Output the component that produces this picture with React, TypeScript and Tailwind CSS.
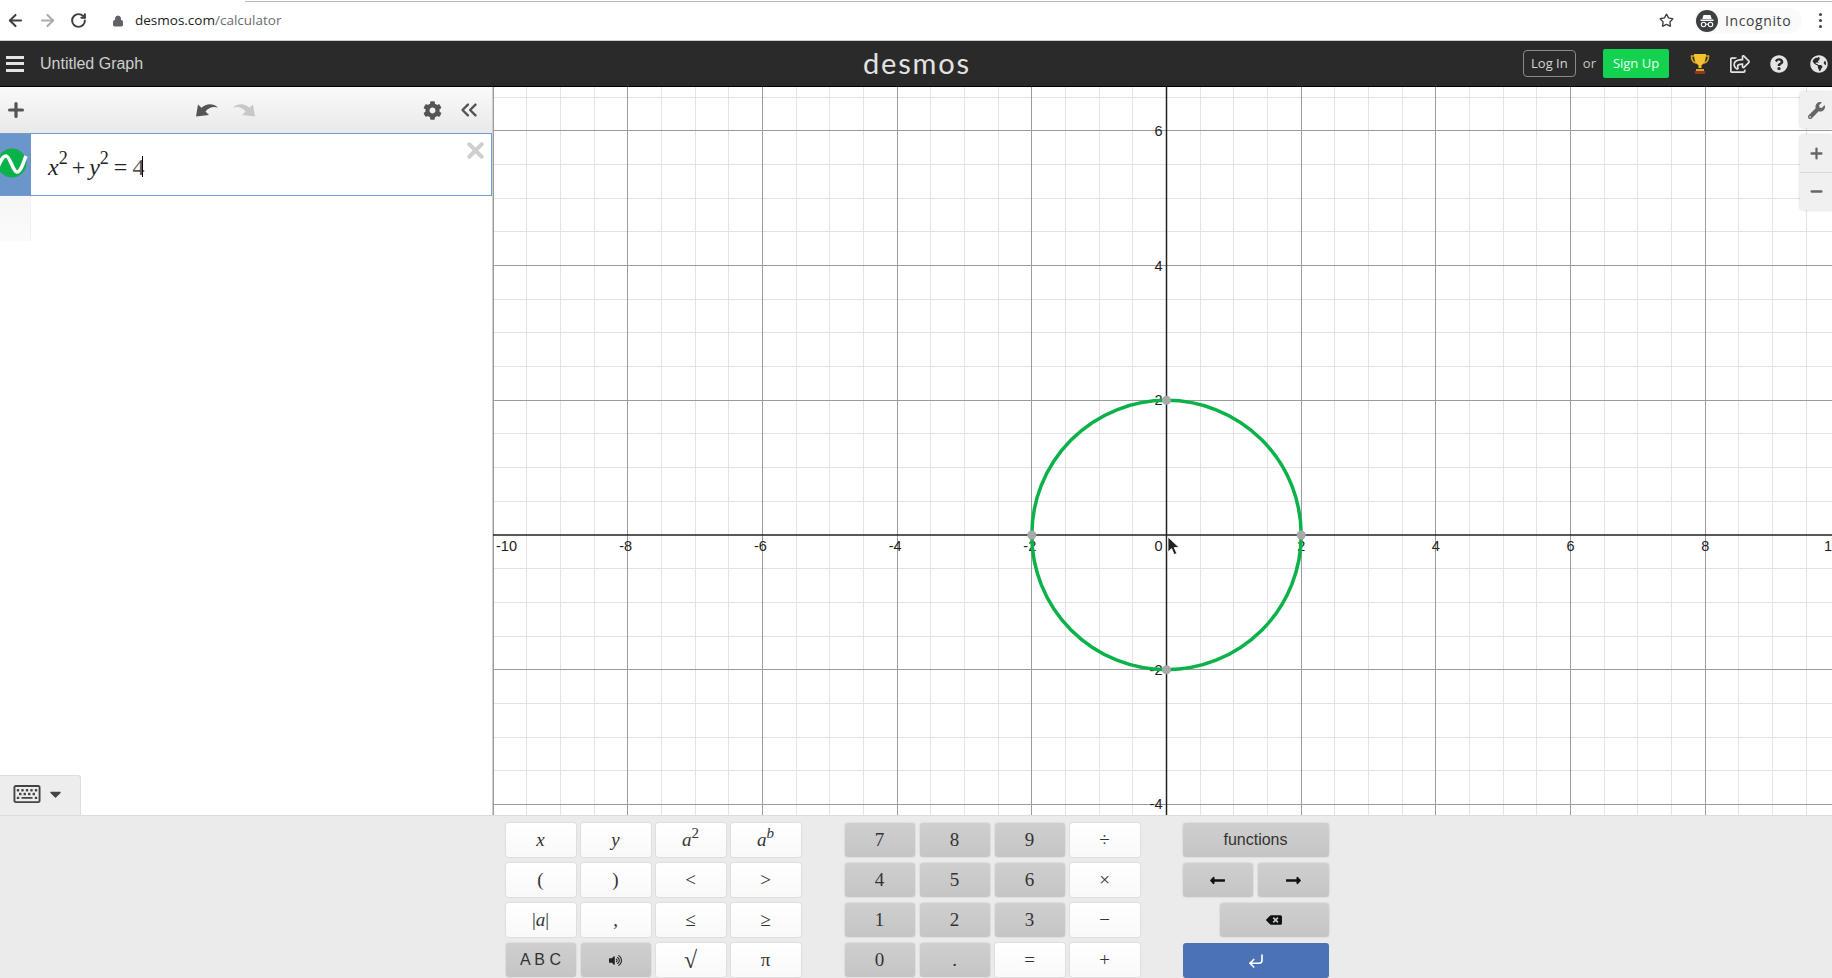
import { ArrowLeft, ArrowRight, RotateCw, Lock, Star, CornerDownLeft, X, Plus, Minus, ChevronsLeft } from "lucide-react";
import {
  FaCog,
  FaWrench,
  FaRegShareSquare,
  FaQuestionCircle,
  FaGlobeAmericas,
  FaRegKeyboard,
  FaCaretDown,
  FaVolumeUp,
  FaBackspace,
  FaLongArrowAltLeft,
  FaLongArrowAltRight,
} from "react-icons/fa";
import type { ReactNode } from "react";

// graph geometry, relative to the graph area
const CX = 673.5;
const CY = 448;
const UNIT = 67.35;
const W = 1339;
const H = 728;

function range(from: number, to: number) {
  const out: number[] = [];
  for (let i = from; i <= to; i++) out.push(i);
  return out;
}

function Graph() {
  const xs = range(-20, 20).map((i) => ({ i, p: Math.round(CX + (i * UNIT) / 2 - 0.5) + 0.5 }));
  const ys = range(-14, 14).map((i) => ({ i, p: Math.round(CY + (i * UNIT) / 2 - 0.5) + 0.5 }));
  const xLabels = [-8, -6, -4, -2, 2, 4, 6, 8];
  const yLabels = [6, 4, 2, -2, -4];
  return (
    <svg width={W} height={H} className="block font-['Liberation_Sans',sans-serif]">
      {xs.filter((l) => l.i % 4 !== 0).map((l) => (
        <line key={l.i} x1={l.p} x2={l.p} y1={0} y2={H} stroke="#e3e3e3" />
      ))}
      {ys.filter((l) => l.i % 4 !== 0).map((l) => (
        <line key={l.i} x1={0} x2={W} y1={l.p} y2={l.p} stroke="#e3e3e3" />
      ))}
      {xs.filter((l) => l.i % 4 === 0 && l.i !== 0).map((l) => (
        <line key={l.i} x1={l.p} x2={l.p} y1={0} y2={H} stroke="#9b9b9b" />
      ))}
      {ys.filter((l) => l.i % 4 === 0 && l.i !== 0).map((l) => (
        <line key={l.i} x1={0} x2={W} y1={l.p} y2={l.p} stroke="#9b9b9b" />
      ))}
      <line x1={CX} x2={CX} y1={0} y2={H} stroke="#222" strokeWidth={1.5} />
      <line x1={0} x2={W} y1={CY} y2={CY} stroke="#222" strokeWidth={1.5} />
      {xLabels.map((n) => (
        <text key={n} x={CX + n * UNIT - (n < 0 ? 2 : 0)} y={CY + 16} textAnchor="middle" fontSize={14.5} fill="#222">
          {n}
        </text>
      ))}
      <text x={3} y={CY + 16} fontSize={14.5} fill="#222">-10</text>
      <text x={1331} y={CY + 16} fontSize={14.5} fill="#222">10</text>
      <text x={CX - 4} y={CY + 16} textAnchor="end" fontSize={14.5} fill="#222">0</text>
      {yLabels.map((n) => (
        <text key={n} x={CX - 4} y={CY - n * UNIT + 5} textAnchor="end" fontSize={14.5} fill="#222">
          {n}
        </text>
      ))}
      <circle cx={CX} cy={CY} r={UNIT * 2} fill="none" stroke="#0bb24a" strokeWidth={3.5} />
      {[[-2, 0], [2, 0], [0, 2], [0, -2]].map(([a, b]) => (
        <circle key={`${a}${b}`} cx={CX + a * UNIT} cy={CY - b * UNIT} r={4.5} fill="#a9a9a9" />
      ))}
      {/* mouse pointer */}
      <path
        d="M675 450v15l3.6-3.4 2.6 6 2.6-1.2-2.6-5.8h5z"
        fill="#222"
        stroke="#fff"
        strokeWidth={0.8}
      />
    </svg>
  );
}

function Key({
  dark,
  sans,
  className,
  children,
}: {
  dark?: boolean;
  sans?: boolean;
  className?: string;
  children: ReactNode;
}) {
  return (
    <div
      className={`flex h-[34px] items-center justify-center rounded-[3px] text-[#333] shadow-[0_0_2px_rgba(0,0,0,0.18)] ${
        sans ? "font-['Liberation_Sans',sans-serif] text-[16px]" : "font-['Liberation_Serif',serif] text-[19px]"
      } ${dark ? "bg-gradient-to-b from-[#cfcfcf] to-[#c5c5c5]" : "bg-gradient-to-b from-white to-[#f9f9f9]"} ${className ?? ""}`}
    >
      {children}
    </div>
  );
}

function Keypad() {
  return (
    <div className="flex h-[163px] justify-center gap-[43px] border-t border-[#dcdcdc] bg-[#ebebeb] pt-[7px] pl-[2px]">
      <div className="mr-px grid grid-cols-4 content-start gap-x-[5px] gap-y-[6px]">
        <Key className="w-[70px] italic">x</Key>
        <Key className="w-[70px] italic">y</Key>
        <Key className="w-[70px] italic">a<sup className="text-[15px] not-italic">2</sup></Key>
        <Key className="w-[70px] italic">a<sup className="text-[15px]">b</sup></Key>
        <Key>(</Key>
        <Key>)</Key>
        <Key>&lt;</Key>
        <Key>&gt;</Key>
        <Key><span>|<i>a</i>|</span></Key>
        <Key>,</Key>
        <Key>≤</Key>
        <Key>≥</Key>
        <Key dark sans className="text-[#222]">A B C</Key>
        <Key dark><FaVolumeUp className="h-[13px] w-[13px] text-[#222]" /></Key>
        <Key className="text-[24px]">√</Key>
        <Key>π</Key>
      </div>
      <div className="grid grid-cols-4 content-start gap-x-[5px] gap-y-[6px]">
        {["7", "8", "9"].map((n) => <Key dark className="w-[70px]" key={n}>{n}</Key>)}
        <Key className="w-[70px]">÷</Key>
        {["4", "5", "6"].map((n) => <Key dark key={n}>{n}</Key>)}
        <Key>×</Key>
        {["1", "2", "3"].map((n) => <Key dark key={n}>{n}</Key>)}
        <Key>−</Key>
        <Key dark>0</Key>
        <Key dark>.</Key>
        <Key>=</Key>
        <Key>+</Key>
      </div>
      <div className="grid w-[146px] grid-cols-2 content-start gap-x-[5px] gap-y-[6px]">
        <Key dark sans className="col-span-2 text-[#111]">functions</Key>
        <Key dark><FaLongArrowAltLeft className="h-[17px] w-[17px] text-[#111]" /></Key>
        <Key dark><FaLongArrowAltRight className="h-[17px] w-[17px] text-[#111]" /></Key>
        <Key dark className="col-span-2 ml-[37px]"><FaBackspace className="h-[16px] w-[16px] text-[#111]" /></Key>
        <div className="col-span-2 flex h-[35px] items-center justify-center rounded-[3px] bg-[#4a72b5]">
          <CornerDownLeft className="h-[18px] w-[22px] text-white" strokeWidth={2.2} />
        </div>
      </div>
    </div>
  );
}

function Trophy() {
  return (
    <svg width="20" height="22" viewBox="0 0 20 22">
      <path d="M4 3H1.500c0 4 1.500 6.500 4.500 7M16 3h2.500c0 4-1.500 6.500-4.500 7" fill="none" stroke="#d9a520" strokeWidth="1.6" />
      <path d="M4 1h12c0 6-1.500 10-4.500 11v3h-3v-3C5.500 11 4 7 4 1z" fill="#f2c230" />
      <path d="M6 16h8v2H6z" fill="#d9a520" />
      <path d="M5 18h10v3H5z" fill="#8f3a1e" />
    </svg>
  );
}

function IncognitoBadge() {
  return (
    <svg width="22" height="22" viewBox="0 0 22 22">
      <circle cx="11" cy="11" r="11" fill="#3c4043" />
      <path d="M7.500 5h7l1.200 4H6.300zM4.500 9.500h13V11h-13z" fill="#fff" />
      <circle cx="7.500" cy="14.500" r="2.200" fill="none" stroke="#fff" strokeWidth="1.100" />
      <circle cx="14.500" cy="14.500" r="2.200" fill="none" stroke="#fff" strokeWidth="1.100" />
      <path d="M9.700 14.200h2.600" stroke="#fff" strokeWidth="1" />
    </svg>
  );
}

function UndoIcon({ flip, className }: { flip?: boolean; className?: string }) {
  return (
    <svg width="22" height="14" viewBox="0 0 22 14" className={`${flip ? "-scale-x-100" : ""} ${className ?? ""}`}>
      <path d="M0 13.500 2 1.500 5.500 4.800C10 0.500 17 0 22 4.500 17 3 12.500 4.500 9.500 8.500L13 12z" fill="currentColor" />
    </svg>
  );
}

export default function App() {
  return (
    <div className="flex h-[978px] w-[1832px] flex-col overflow-hidden bg-white font-['Liberation_Sans',sans-serif]">
      {/* browser toolbar */}
      <div className="h-[41px] shrink-0 border-b border-[#cdcdcd] bg-white">
        <div className="mt-px ml-[245px] h-px bg-[#b8b8b8]" />
        <div className="flex h-[37px] items-center pr-[10px] pl-[6px]">
          <ArrowLeft className="h-[19px] w-[19px] text-[#3c4043]" strokeWidth={2.6} />
          <ArrowRight className="ml-[13px] h-[19px] w-[19px] text-[#a8abaf]" strokeWidth={2.6} />
          <RotateCw className="ml-[13px] h-[17px] w-[17px] text-[#3c4043]" strokeWidth={2.8} />
          <Lock className="ml-[25px] h-[12px] w-[12px] fill-[#5f6368] text-[#5f6368]" />
          <span className="ml-[11px] font-['Open_Sans',sans-serif] text-[13.5px] text-[#202124]">
            desmos.com<span className="text-[#6a6d70]">/calculator</span>
          </span>
          <Star className="ml-auto h-[15px] w-[15px] text-[#3c4043]" strokeWidth={2.2} />
          <div className="ml-[20px] flex h-[26px] w-[108px] items-center rounded-full bg-[#fafafa] pl-[2px]">
            <IncognitoBadge />
            <span className="ml-[7px] font-['Open_Sans',sans-serif] text-[14px] tracking-[0.6px] text-[#3c4043]">Incognito</span>
          </div>
          <div className="ml-[17px] flex flex-col gap-[3px]">
            <span className="h-[3px] w-[3px] rounded-full bg-[#3c4043]" />
            <span className="h-[3px] w-[3px] rounded-full bg-[#3c4043]" />
            <span className="h-[3px] w-[3px] rounded-full bg-[#3c4043]" />
          </div>
        </div>
      </div>

      {/* desmos header */}
      <div className="relative flex h-[46px] shrink-0 items-center border-b border-black bg-[#2a2a2a] pr-[4px] pl-[6px]">
        <div className="flex w-[18px] flex-col gap-[3.5px]">
          <span className="h-[3px] bg-[#e4e4e4]" />
          <span className="h-[3px] bg-[#e4e4e4]" />
          <span className="h-[3px] bg-[#e4e4e4]" />
        </div>
        <span className="ml-[16px] text-[16px] text-[#cfcfcf]">Untitled Graph</span>
        <span className="absolute top-[1px] left-[863px] font-['Lato',sans-serif] text-[29px] leading-[42px] tracking-[1.8px] text-[#e2e2e2]">
          desmos
        </span>
        <div className="ml-auto flex items-center">
          <span className="flex h-[27px] w-[53px] items-center justify-center rounded-[4px] border border-[#8a8a8a] font-['Open_Sans',sans-serif] text-[13px] text-[#d5d5d5]">
            Log In
          </span>
          <span className="ml-[7px] font-['Open_Sans',sans-serif] text-[13px] text-[#c8c8c8]">or</span>
          <span className="ml-[7px] flex h-[29px] w-[66px] items-center justify-center rounded-[2px] bg-[#12d24f] font-['Open_Sans',sans-serif] text-[13px] text-[#eafff0]">
            Sign Up
          </span>
          <span className="ml-[21px] flex w-[20px] justify-center"><Trophy /></span>
          <FaRegShareSquare className="ml-[20px] h-[18px] w-[20px] text-[#e4e4e4]" />
          <FaQuestionCircle className="ml-[20px] h-[18px] w-[18px] text-[#e4e4e4]" />
          <FaGlobeAmericas className="ml-[22px] h-[18px] w-[18px] text-[#e4e4e4]" />
        </div>
      </div>

      <div className="flex min-h-0 flex-1">
        {/* expression list */}
        <div className="relative flex w-[493px] shrink-0 flex-col border-r border-[#cfcfcf] bg-white">
          <div className="flex h-[46px] items-center bg-gradient-to-b from-[#fafafa] to-[#e9e9e9] text-[#555]">
            <Plus className="ml-[5px] h-[22px] w-[22px]" strokeWidth={3.5} />
            <UndoIcon className="ml-[169px]" />
            <UndoIcon flip className="ml-[15px] text-[#c8c8c8]" />
            <FaCog className="ml-[168px] h-[19px] w-[19px]" />
            <ChevronsLeft className="ml-[14px] h-[26px] w-[26px]" strokeWidth={2.2} />
          </div>
          <div className="flex h-[63px] border border-[#6f9bd1] border-l-0">
            <div className="flex w-[31px] shrink-0 items-center overflow-hidden bg-[#6a96cb]">
              <svg width="31" height="32" viewBox="0 0 31 32" className="-mt-[4px]">
                <circle cx="12" cy="16" r="14.500" fill="#0bb24a" />
                <path d="M-2 20C1 13 3 9 6 9C10 9 13 25 17 25C21 25 23 16 26 9" fill="none" stroke="#fff" strokeWidth="3.500" />
              </svg>
            </div>
            <div className="flex flex-1 items-center pt-[4px] pl-[17px] font-['Liberation_Serif',serif] text-[24px] text-[#222]">
              <i>x</i><sup className="text-[18px]">2</sup>
              <span className="mx-[4px]">+</span>
              <i>y</i><sup className="text-[18px]">2</sup>
              <span className="mx-[5px]">=</span>
              <span className="text-[#555]">4</span>
              <span className="-ml-[2px] h-[21px] w-px bg-black" />
            </div>
            <X className="mt-[4px] mr-[3px] h-[25px] w-[25px] text-[#cfcfcf]" strokeWidth={3.8} />
          </div>
          <div className="h-[45px] w-[31px] border-r border-[#f0f0f0] bg-gradient-to-b from-[#f6f6f6] to-[#fbfbfb]" />
          <div className="absolute bottom-0 left-0 flex h-[40px] w-[81px] items-center rounded-tr-[3px] border-t border-r border-[#dedede] bg-[#ededed] pb-[4px] pl-[13px] text-[#444]">
            <FaRegKeyboard className="h-[24px] w-[28px]" />
            <FaCaretDown className="ml-[7px] h-[18px] w-[15px]" />
          </div>
        </div>

        {/* graph paper */}
        <div className="relative min-w-0 flex-1 overflow-hidden bg-white">
          <Graph />
          <div className="absolute top-[5px] right-0 flex h-[36px] w-[32px] items-center justify-center rounded-l-[3px] bg-[#f0f0f0] shadow-[0_0_3px_rgba(0,0,0,0.2)]">
            <FaWrench className="h-[17px] w-[17px] text-[#666]" />
          </div>
          <div className="absolute top-[48px] right-0 flex h-[75px] w-[32px] flex-col rounded-l-[3px] bg-[#f0f0f0] text-[#666] shadow-[0_0_3px_rgba(0,0,0,0.2)]">
            <div className="flex flex-1 items-center justify-center border-b border-[#d8d8d8]">
              <Plus className="h-[17px] w-[17px]" strokeWidth={3.2} />
            </div>
            <div className="flex flex-1 items-center justify-center">
              <Minus className="h-[17px] w-[17px]" strokeWidth={3.2} />
            </div>
          </div>
        </div>
      </div>

      <Keypad />
    </div>
  );
}
